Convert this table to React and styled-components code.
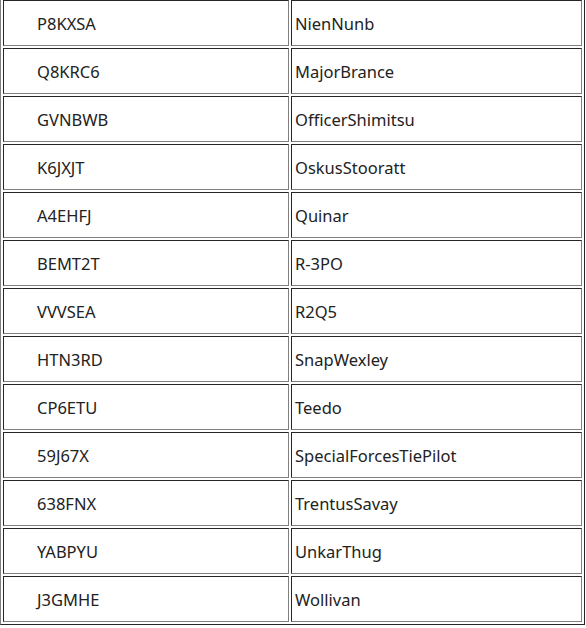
import React from "react";
import styled, { createGlobalStyle } from "styled-components";

const GlobalStyle = createGlobalStyle`
  html, body {
    margin: 0;
    padding: 0;
    background: #ffffff;
  }
`;

const StyledTable = styled.table`
  margin-top: -3px;
  width: 585px;
  table-layout: fixed;
  border-collapse: separate;
  border-spacing: 2px;
  border-style: solid;
  border-width: 1px;
  border-color: #808080 #262626 #262626 #808080;
  font-family: "Noto Sans", "Open Sans", sans-serif;
  font-size: 16.5px;
  color: #222222;
`;

const StyledCell = styled.td`
  box-sizing: border-box;
  width: ${props => (props.code ? "286px" : "291px")};
  padding: 2px 0 0 ${props => (props.code ? "33px" : "3px")};
  line-height: 42px;
  white-space: nowrap;
  border-style: solid;
  border-width: 1px;
  border-color: #262626 #808080 #808080 #262626;
`;

const rows = [
  ["P8KXSA", "NienNunb"],
  ["Q8KRC6", "MajorBrance"],
  ["GVNBWB", "OfficerShimitsu"],
  ["K6JXJT", "OskusStooratt"],
  ["A4EHFJ", "Quinar"],
  ["BEMT2T", "R-3PO"],
  ["VVVSEA", "R2Q5"],
  ["HTN3RD", "SnapWexley"],
  ["CP6ETU", "Teedo"],
  ["59J67X", "SpecialForcesTiePilot"],
  ["638FNX", "TrentusSavay"],
  ["YABPYU", "UnkarThug"],
  ["J3GMHE", "Wollivan"]
];

const App = () => {
  return (
    <>
      <GlobalStyle />
      <StyledTable>
        <tbody>
          {rows.map(([code, name]) => (
            <tr key={code}>
              <StyledCell code>{code}</StyledCell>
              <StyledCell>{name}</StyledCell>
            </tr>
          ))}
        </tbody>
      </StyledTable>
    </>
  );
};

export default App;
